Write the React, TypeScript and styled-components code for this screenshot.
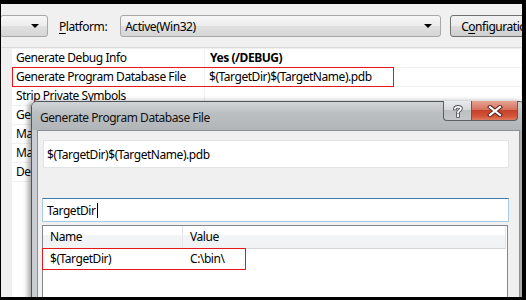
import styled, { createGlobalStyle } from "styled-components";

const GlobalStyle = createGlobalStyle`
  html, body {
    margin: 0;
    padding: 0;
    background: #000;
  }
  body {
    font-family: "Noto Sans", "Open Sans", sans-serif;
    font-size: 12px;
    letter-spacing: -0.45px;
    color: #000;
  }
`;

const Frame = styled.div`
  width: 526px;
  height: 300px;
  padding: 4px 4px 3px 1px;
  box-sizing: border-box;
  background: #000;
`;

const Screen = styled.div`
  position: relative;
  width: 521px;
  height: 293px;
  overflow: hidden;
  background: #f0f0f0;
  display: flex;
  flex-direction: column;
`;

/* ---------- toolbar ---------- */

const Toolbar = styled.div`
  height: 44px;
  flex: none;
  display: flex;
  align-items: center;
  padding-top: 1px;
  box-sizing: border-box;
  border-bottom: 1px solid #d9d9d9;
`;

const Combo = styled.div<{ $width: number; $shift?: number }>`
  width: ${({ $width }) => $width}px;
  margin-left: ${({ $shift = 0 }) => $shift}px;
  height: 22px;
  box-sizing: border-box;
  border: 1px solid #a8a8a8;
  border-radius: 3px;
  background: linear-gradient(#f7f7f7, #ececec 50%, #e0e0e0 50%, #d6d6d6);
  display: flex;
  align-items: center;
  padding: 0 8px 0 4px;
  flex: none;
`;

const ComboText = styled.span`
  flex: 1;
  white-space: nowrap;
`;

const Arrow = styled.span`
  width: 0;
  height: 0;
  border-left: 4px solid transparent;
  border-right: 4px solid transparent;
  border-top: 4px solid #000;
`;

const Label = styled.span`
  width: 49px;
  margin: 0 13px 0 11px;
  white-space: nowrap;
`;

const Key = styled.span`
  text-decoration: underline;
  text-underline-offset: 2px;
`;

const Button = styled.div`
  margin-left: 9px;
  height: 22px;
  width: 90px;
  flex: none;
  box-sizing: border-box;
  border: 1px solid #707070;
  border-radius: 3px;
  background: linear-gradient(#f2f2f2, #ebebeb 50%, #dddddd 50%, #cfcfcf);
  padding-left: 10px;
  display: flex;
  align-items: center;
  white-space: nowrap;
  overflow: hidden;
`;

/* ---------- property grid ---------- */

const Grid = styled.div`
  margin-left: 11px;
  margin-top: 1px;
  flex: 1;
  background: #fff;
`;

const Row = styled.div`
  position: relative;
  display: grid;
  grid-template-columns: 193px 1fr;
  height: 19px;
  border-bottom: 1px solid #f0f0f0;
  box-sizing: border-box;
`;

const Cell = styled.div<{ $bold?: boolean }>`
  padding-left: ${({ $bold }) => ($bold ? 5 : 4)}px;
  line-height: 18px;
  white-space: nowrap;
  overflow: hidden;
  font-weight: ${({ $bold }) => ($bold ? 700 : 400)};
  border-right: 1px solid #f0f0f0;
`;

const Marker = styled.div<{ $width: number }>`
  position: absolute;
  left: 0;
  top: -1px;
  width: ${({ $width }) => $width}px;
  height: 20px;
  border: 1.5px solid #e8151b;
  box-sizing: border-box;
  pointer-events: none;
`;

/* ---------- dialog ---------- */

const Dialog = styled.div`
  position: absolute;
  left: 30px;
  top: 97px;
  width: 494px;
  height: 220px;
  box-sizing: border-box;
  border: 1px solid #4f5459;
  border-radius: 6px 6px 0 0;
  background: linear-gradient(90deg, #c9cdd1, #bfc3c6 40%, #b0b3b6 80%, #a9acae);
  box-shadow: -3px 0 5px rgba(0, 0, 0, 0.35);
  display: flex;
  flex-direction: column;
`;

const TitleBar = styled.div`
  height: 28px;
  flex: none;
  display: flex;
  align-items: flex-start;
  background: linear-gradient(#d2d5d8, #bcbfc2 40%, #b3b6b9);
  border-radius: 5px 5px 0 0;
`;

const Title = styled.span`
  flex: 1;
  padding: 7px 0 0 8px;
  white-space: nowrap;
  color: #111;
`;

const Controls = styled.div`
  display: flex;
  margin-right: 6px;
  margin-top: -1px;
`;

const CaptionButton = styled.div<{ $close?: boolean }>`
  width: ${({ $close }) => ($close ? 46 : 29)}px;
  height: 20px;
  box-sizing: border-box;
  border: 1px solid #5b5e62;
  border-top: none;
  border-left: ${({ $close }) => ($close ? "none" : "1px solid #5b5e62")};
  border-radius: ${({ $close }) => ($close ? "0 0 4px 0" : "0 0 0 4px")};
  background: ${({ $close }) =>
    $close
      ? "linear-gradient(#e6a393, #d6735e 45%, #c7402a 50%, #d2543b 80%, #e07a5e)"
      : "linear-gradient(#e9eaeb, #d6d8da 45%, #bdc0c3 50%, #c5c8cb)"};
  display: flex;
  align-items: center;
  justify-content: center;
`;

const Body = styled.div`
  flex: 1;
  margin: 0 4px 0 5px;
  border: 1px solid #8c8f93;
  border-bottom: none;
  background: #f0f0f0;
  padding: 9px 10px 0 4px;
  display: flex;
  flex-direction: column;
`;

const TextBox = styled.div<{ $focused?: boolean; $height: number; $indent?: number }>`
  height: ${({ $height }) => $height}px;
  margin-left: ${({ $indent = 0 }) => $indent}px;
  flex: none;
  box-sizing: border-box;
  background: #fff;
  border: 1px solid ${({ $focused }) => ($focused ? "#a9cbe6" : "#e2e3e5")};
  border-top-color: ${({ $focused }) => ($focused ? "#3d7bad" : "#e2e3e5")};
  padding-left: ${({ $focused }) => ($focused ? 4 : 3)}px;
  display: flex;
  align-items: center;
  white-space: nowrap;
`;

const Caret = styled.span`
  display: inline-block;
  width: 1px;
  height: 15px;
  background: #000;
  margin-left: 1px;
`;

const Gap = styled.div<{ $size: number }>`
  height: ${({ $size }) => $size}px;
  flex: none;
`;

const List = styled.div`
  flex: 1;
  margin-top: 3px;
  margin-right: 1px;
  border: 1px solid #828790;
  background: #fff;
`;

const ListHeader = styled.div`
  display: grid;
  grid-template-columns: 140px 1fr;
  height: 23px;
  margin-right: 1px;
  box-sizing: border-box;
  background: linear-gradient(#fff 40%, #f3f4f6 42%, #f1f2f4);
  border-bottom: 1px solid #d5d5d5;
  border-right: 1px solid #e5e5e5;
`;

const HeaderCell = styled.div`
  padding-left: 7px;
  line-height: 22px;
  border-right: 1px solid #e5e5e5;
  &:last-child {
    border-right: none;
  }
`;

const ListRow = styled.div`
  position: relative;
  display: grid;
  grid-template-columns: 140px 1fr;
  height: 20px;
`;

const ListCell = styled.div`
  padding-left: 7px;
  line-height: 20px;
  white-space: nowrap;
`;

const ListMarker = styled.div`
  position: absolute;
  left: -1px;
  top: -1px;
  width: 204px;
  height: 22px;
  border: 1.5px solid #e8151b;
  box-sizing: border-box;
`;

const HelpGlyph = () => (
  <svg width="12" height="14" viewBox="0 0 12 14">
    <path
      d="M3 4.5 C3 2.2 9 2.2 9 4.6 C9 6.6 6 6.6 6 8.6 M6 11 L6 12"
      fill="none"
      stroke="#4a4d52"
      strokeWidth="3.6"
      strokeLinecap="square"
    />
    <path
      d="M3 4.5 C3 2.2 9 2.2 9 4.6 C9 6.6 6 6.6 6 8.6 M6 11 L6 12"
      fill="none"
      stroke="#fff"
      strokeWidth="1.8"
      strokeLinecap="square"
    />
  </svg>
);

const CloseGlyph = () => (
  <svg width="16" height="12" viewBox="0 0 16 12">
    <path d="M3 2 L13 10 M13 2 L3 10" stroke="#5a2a22" strokeWidth="4.2" strokeLinecap="square" />
    <path d="M3 2 L13 10 M13 2 L3 10" stroke="#fff" strokeWidth="2.2" strokeLinecap="square" />
  </svg>
);

const properties: { name: string; value?: string; bold?: boolean; marked?: boolean }[] = [
  { name: "Generate Debug Info", value: "Yes (/DEBUG)", bold: true },
  { name: "Generate Program Database File", value: "$(TargetDir)$(TargetName).pdb", marked: true },
  { name: "Strip Private Symbols" },
  { name: "Generate Map File" },
  { name: "Map File Name" },
  { name: "Map Exports" },
  { name: "Debuggable Assembly" },
];

export default function App() {
  return (
    <>
      <GlobalStyle />
      <Frame>
        <Screen>
          <Toolbar>
            <Combo $width={48} $shift={-1}>
              <ComboText />
              <Arrow />
            </Combo>
            <Label>
              <Key>P</Key>latform:
            </Label>
            <Combo $width={321}>
              <ComboText>Active(Win32)</ComboText>
              <Arrow />
            </Combo>
            <Button>
              C<Key>o</Key>nfiguration Manager...
            </Button>
          </Toolbar>

          <Grid>
            {properties.map((p) => (
              <Row key={p.name}>
                <Cell>{p.name}</Cell>
                <Cell $bold={p.bold}>{p.value}</Cell>
                {p.marked && <Marker $width={382} />}
              </Row>
            ))}
          </Grid>

          <Dialog>
            <TitleBar>
              <Title>Generate Program Database File</Title>
              <Controls>
                <CaptionButton>
                  <HelpGlyph />
                </CaptionButton>
                <CaptionButton $close>
                  <CloseGlyph />
                </CaptionButton>
              </Controls>
            </TitleBar>
            <Body>
              <TextBox $height={28} $indent={1}>
                $(TargetDir)$(TargetName).pdb
              </TextBox>
              <Gap $size={30} />
              <TextBox $height={24} $focused>
                TargetDir
                <Caret />
              </TextBox>
              <List>
                <ListHeader>
                  <HeaderCell>Name</HeaderCell>
                  <HeaderCell>Value</HeaderCell>
                </ListHeader>
                <ListRow>
                  <ListCell>$(TargetDir)</ListCell>
                  <ListCell>C:\bin\</ListCell>
                  <ListMarker />
                </ListRow>
              </List>
            </Body>
          </Dialog>
        </Screen>
      </Frame>
    </>
  );
}
